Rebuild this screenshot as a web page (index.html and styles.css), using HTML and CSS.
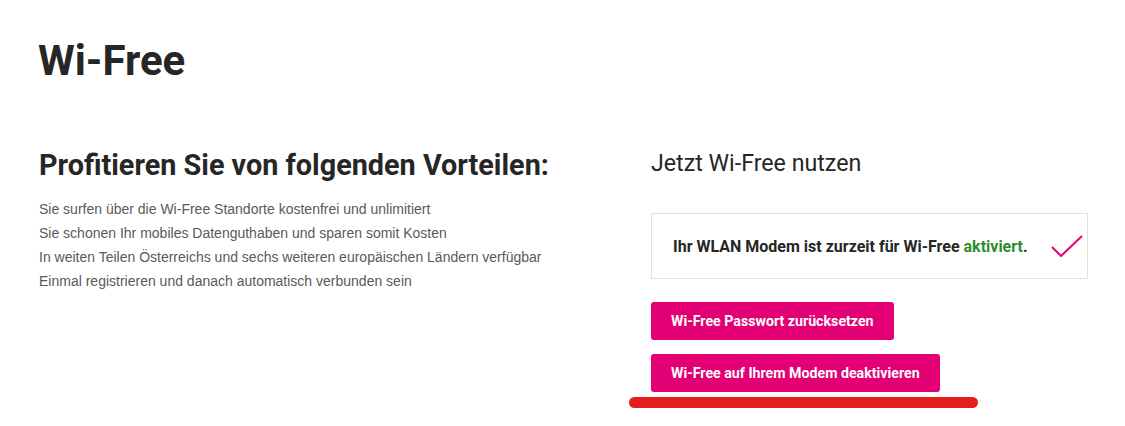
FILE: index.html
```html
<!DOCTYPE html>
<html lang="de">
<head>
<meta charset="utf-8">
<title>Wi-Free</title>
<link rel="stylesheet" href="styles.css">
</head>
<body>
<main class="page">
  <h1 class="title">Wi-Free</h1>
  <div class="row">
    <section class="benefits">
      <h2 class="benefits-title">Profitieren Sie von folgenden Vorteilen:</h2>
      <ul class="benefit-list">
        <li>Sie surfen über die Wi-Free Standorte kostenfrei und unlimitiert</li>
        <li>Sie schonen Ihr mobiles Datenguthaben und sparen somit Kosten</li>
        <li>In weiten Teilen Österreichs und sechs weiteren europäischen Ländern verfügbar</li>
        <li>Einmal registrieren und danach automatisch verbunden sein</li>
      </ul>
    </section>
    <section class="use">
      <h2 class="use-title">Jetzt Wi-Free nutzen</h2>
      <div class="status">
        <p class="status-text">Ihr WLAN Modem ist zurzeit für Wi-Free <span class="ok">aktiviert</span>.</p>
        <svg class="check" width="32" height="22" viewBox="0 0 32 22" aria-hidden="true">
          <polyline points="1,12 10,21 31,1" fill="none" stroke="#e20074" stroke-width="2"/>
        </svg>
      </div>
      <div class="actions">
        <button class="btn">Wi-Free Passwort zurücksetzen</button>
        <div class="btn-wrap">
          <button class="btn">Wi-Free auf Ihrem Modem deaktivieren</button>
          <div class="mark"></div>
        </div>
      </div>
    </section>
  </div>
</main>
</body>
</html>
```

FILE: styles.css
```css
* { box-sizing: border-box; }
html, body { margin: 0; padding: 0; background: #fff; }
body { font-family: "Liberation Sans", Arial, sans-serif; color: #262626; }

.page { padding: 35px 37px 0 38px; }

.title {
  margin: 0;
  font-family: Roboto, "Liberation Sans", sans-serif;
  font-weight: 700;
  font-size: 42px;
  line-height: 52px;
  color: #262626;
}

.row { display: flex; margin-top: 61px; }
.benefits { flex: 1; }
.use { width: 437px; }

.benefits-title {
  margin: 0 0 0 1px;
  font-family: Roboto, "Liberation Sans", sans-serif;
  font-weight: 700;
  font-size: 28.8px;
  line-height: 34px;
  color: #262626;
}

.benefit-list {
  list-style: none;
  margin: 15px 0 0 1px;
  padding: 0;
  font-size: 14px;
  line-height: 24px;
  color: #5a5a5a;
}

.use-title {
  margin: 1px 0 0 0;
  font-family: Roboto, "Liberation Sans", sans-serif;
  font-weight: 400;
  font-size: 23.2px;
  line-height: 28px;
  color: #262626;
}

.status {
  margin-top: 36px;
  height: 66px;
  border: 1px solid #e0e0e0;
  display: flex;
  align-items: center;
  padding: 0 4px 0 21px;
}
.status-text {
  margin: 0;
  font-family: Roboto, "Liberation Sans", sans-serif;
  font-weight: 700;
  font-size: 16px;
  color: #262626;
}
.ok { color: #2e8b2e; }
.check { margin-left: auto; display: block; }

.actions {
  margin-top: 23px;
  display: flex;
  flex-direction: column;
  align-items: flex-start;
  gap: 14px;
}
.btn {
  display: block;
  height: 38px;
  padding: 0 20px;
  border: 0;
  border-radius: 3px;
  background: #e20074;
  color: #fff;
  font-family: Roboto, "Liberation Sans", sans-serif;
  font-weight: 700;
  font-size: 14.2px;
}
.mark {
  margin: 5px 0 0 -22px;
  width: 349px;
  height: 11px;
  border-radius: 6px;
  background: #e51e1e;
}
```
